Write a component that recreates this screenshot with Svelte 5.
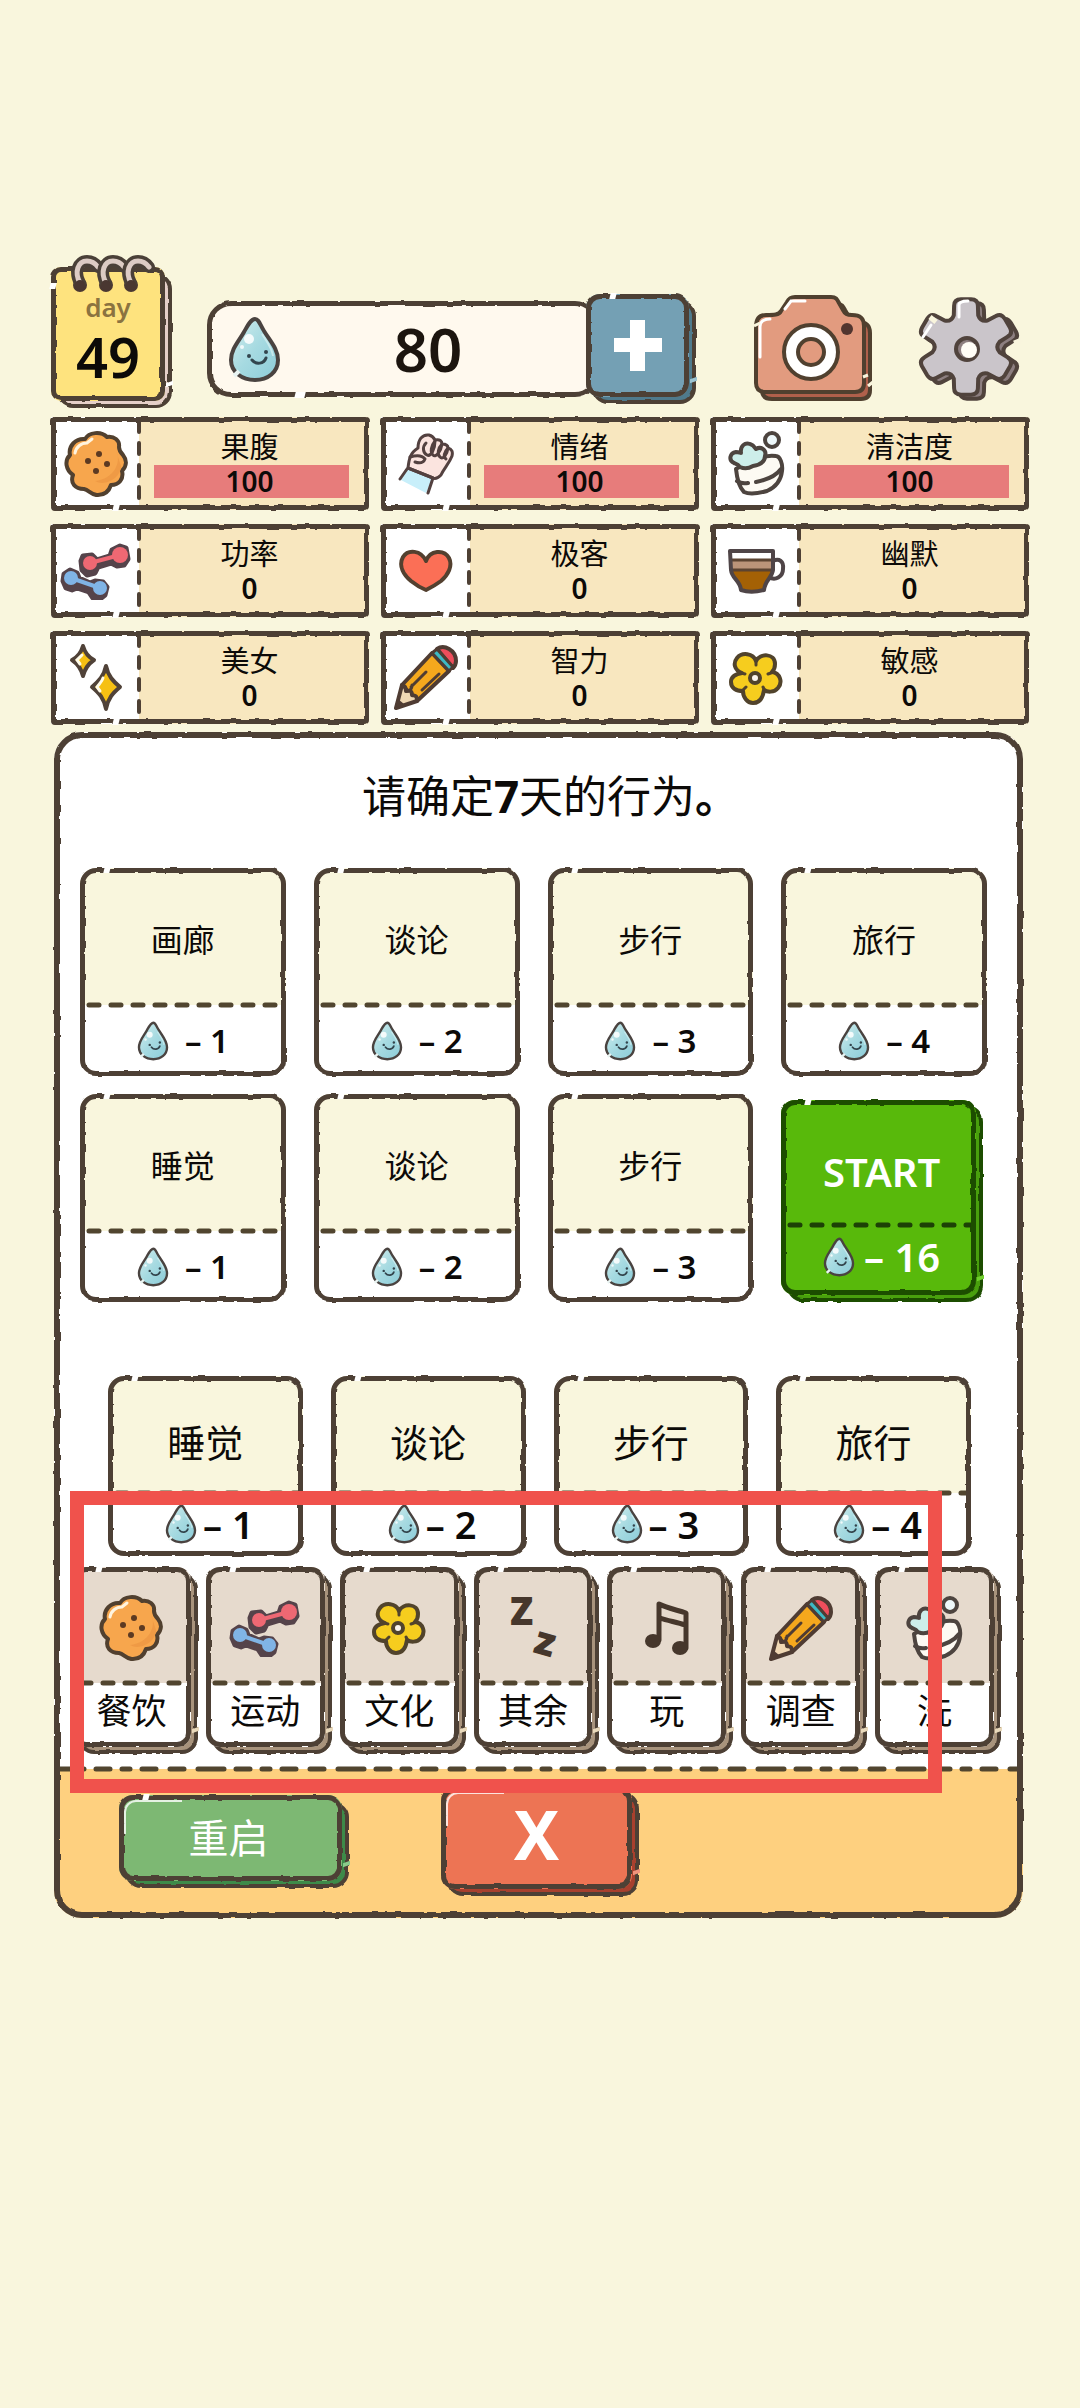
<script>
  const stats = [
    { label: '果腹', value: 100, icon: 'cookie', full: true },
    { label: '情绪', value: 100, icon: 'fist', full: true },
    { label: '清洁度', value: 100, icon: 'soap', full: true },
    { label: '功率', value: 0, icon: 'dumbbell' },
    { label: '极客', value: 0, icon: 'heart' },
    { label: '幽默', value: 0, icon: 'cup' },
    { label: '美女', value: 0, icon: 'sparkle' },
    { label: '智力', value: 0, icon: 'pencil' },
    { label: '敏感', value: 0, icon: 'flower' }
  ];

  const plan = [
    { label: '画廊', cost: 1 },
    { label: '谈论', cost: 2 },
    { label: '步行', cost: 3 },
    { label: '旅行', cost: 4 },
    { label: '睡觉', cost: 1 },
    { label: '谈论', cost: 2 },
    { label: '步行', cost: 3 }
  ];

  const choices = [
    { label: '睡觉', cost: 1 },
    { label: '谈论', cost: 2 },
    { label: '步行', cost: 3 },
    { label: '旅行', cost: 4 }
  ];

  const categories = [
    { label: '餐饮', icon: 'cookie' },
    { label: '运动', icon: 'dumbbell' },
    { label: '文化', icon: 'flower' },
    { label: '其余', icon: 'sleep' },
    { label: '玩', icon: 'music' },
    { label: '调查', icon: 'pencil' },
    { label: '洗', icon: 'soap' }
  ];

  // Six-toothed wheel around (49, 50).
  function gearPath() {
    const point = (r, deg) => {
      const a = (deg * Math.PI) / 180;
      return `${(49 + r * Math.cos(a)).toFixed(1)} ${(50 + r * Math.sin(a)).toFixed(1)}`;
    };
    let d = '';
    for (let i = 0; i < 6; i++) {
      const t = -90 + i * 60;
      d += `${i ? 'L' : 'M'}${point(34, t - 21)}L${point(43, t - 16)}Q${point(49, t - 14)} ${point(48, t - 6)}`;
      d += `L${point(48, t + 6)}Q${point(49, t + 14)} ${point(43, t + 16)}L${point(34, t + 21)}Q${point(29, t + 30)} ${point(34, t + 39)}`;
    }
    return d + 'Z';
  }
  const gear = gearPath();
</script>

{#snippet drop(w, h)}
  <svg class="drop" width={w} height={h} viewBox="0 0 53 67" aria-hidden="true">
    <path d="M27 3c4 0 5 6 9 12 6 10 14 18 14 29 0 12-10 20-23 20S3 56 3 44c0-11 8-19 13-28 4-7 7-13 11-13z" fill="url(#water)" stroke="#4a4340" stroke-width="4" />
    <circle cx="21" cy="23" r="5" fill="#fff" opacity=".85" />
    <circle cx="14" cy="31" r="2" fill="#fff" opacity=".8" />
    <path d="M34 18c5 8 10 14 11 22" fill="none" stroke="#d9f1f1" stroke-width="2" opacity=".7" />
    <circle cx="21" cy="40" r="2" fill="#33454d" />
    <circle cx="38" cy="36" r="2" fill="#33454d" />
    <path d="M24 44c4 5 12 4 14-2" fill="none" stroke="#33454d" stroke-width="3" stroke-linecap="round" />
    <path d="M6 60l5-5" stroke="#e9f4f2" stroke-width="4" />
  </svg>
{/snippet}

{#snippet icon(name)}
  {#if name === 'cookie'}
    <svg width="64" height="66" viewBox="0 0 64 66" aria-hidden="true">
      <path d="M21 8C25 1 37 0 43 6c7-1 13 3 12 10 0 3 1 5 4 8 4 5 4 11-1 16 2 8-3 14-11 14-2 6-6 10-13 10-6 1-9-5-14-6C11 58 6 52 9 44 2 39 0 30 6 24 4 15 12 7 21 8z" fill="#f7a64d" stroke="#51402f" stroke-width="4" stroke-linejoin="round" />
      <path d="M52 20c6 11-2 28-21 30 10 6 26-3 26-15" fill="#ef9a45" />
      <path d="M11 22c1-6 6-10 12-10l5-4" fill="none" stroke="#fff4df" stroke-width="3" stroke-linecap="round" />
      <g fill="#5c3a22"><circle cx="35" cy="23" r="3" /><circle cx="24" cy="30" r="3" /><circle cx="43" cy="33" r="3" /><circle cx="32" cy="40" r="3" /></g>
    </svg>
  {:else if name === 'fist'}
    <svg width="57" height="62" viewBox="0 0 57 62" aria-hidden="true">
      <path d="M10 36L1 46l27 14 7-16z" fill="#c8effa" />
      <g stroke="#534140" stroke-width="3" stroke-linejoin="round" stroke-linecap="round">
        <path d="M10 35c1-9 2-15 10-20 0-8 4-14 11-13 4 1 5 3 6 5 5-1 7 1 7 4 5 0 6 2 6 4 4 1 5 4 4 8-3 8-8 12-11 19-3 3-6 4-8 3z" fill="#fbe4df" />
        <path d="M28 10c-4 4-3 10 1 12s8-6 8-14M37 8c-4 5-5 11-2 14s8-4 9-11M44 11c-4 4-5 10-2 13s7-2 8-9M50 15c-4 4-5 9-2 11M12 24c7-2 12-2 15 2-2 5-7 4-10 3" fill="none" />
        <path d="M10 35l25 10M9 36l-7 10M35 45l-5 15" fill="none" />
      </g>
    </svg>
  {:else if name === 'soap'}
    <svg width="57" height="65" viewBox="0 0 57 65" aria-hidden="true">
      <g stroke="#4d443f" stroke-width="4" stroke-linejoin="round" stroke-linecap="round">
        <path d="M8 38c1 10 3 18 8 23 6 3 16 1 23-1 9-4 14-11 15-20 1-7-2-15-6-15-6-1-12 0-18 4-8 4-16 5-22 9z" fill="#fdfaf3" />
        <path d="M9 50c3 2 6 3 11 2M28 51c10-2 20-6 25-13" fill="none" />
        <path d="M12 36c-2-3-3-3-6-4-6-3-4-10 2-11 3 0 4 1 5 1-1-7 4-11 9-9 4 1 5 4 6 5 5-3 11 1 9 7 0 7-6 9-12 10-5 3-9 3-13 1z" fill="#cdeeea" />
        <circle cx="44" cy="9" r="7" fill="#eef8fa" />
      </g>
    </svg>
  {:else if name === 'dumbbell'}
    <svg width="72" height="58" viewBox="0 0 72 58" aria-hidden="true">
      <g stroke="#55434a" fill="#55434a" stroke-width="5" stroke-linejoin="round">
        <path d="M23 14l9-1 5 5 13-4 2-6 8-4 6 2 2 11-4 6-7 1-6-3-13 4-3 6-8 2-5-5-1-9z" />
        <path d="M4 32l6-4 7 3 2 5 11 5 5-2 8 1 4 5-2 8-5 4-7-1-4-6-12-4-5 2-6-2-3-7z" />
      </g>
      <g fill="#ee6873" stroke="#ee6873" stroke-linecap="round">
        <circle cx="30" cy="21" r="7" stroke="none" />
        <circle cx="60" cy="13" r="8" stroke="none" />
        <path d="M30 21l30-8" stroke-width="4" />
      </g>
      <g fill="#80b4e6" stroke="#80b4e6" stroke-linecap="round">
        <circle cx="11" cy="36" r="7" stroke="none" />
        <circle cx="40" cy="46" r="7" stroke="none" />
        <path d="M11 36l29 10" stroke-width="4" />
      </g>
    </svg>
  {:else if name === 'heart'}
    <svg width="54" height="44" viewBox="0 0 54 44" aria-hidden="true">
      <path d="M27 12C22 1 9 0 4 8c-5 9 1 18 8 24 5 4 10 7 15 9 6-3 11-6 15-9 7-6 12-15 8-23C45 0 31 1 27 12z" fill="#fb6f56" stroke="#53402f" stroke-width="4" stroke-linejoin="round" />
    </svg>
  {:else if name === 'cup'}
    <svg width="59" height="46" viewBox="0 0 59 46" aria-hidden="true">
      <path d="M46 13c6-3 11 0 10 8 0 8-8 12-14 8" fill="none" stroke="#4f4547" stroke-width="4" />
      <path d="M3 3h43v19c-1 8-8 10-9 20-8 2-17 2-23 0C13 32 5 31 4 22z" fill="#fff" />
      <path d="M3 12h43v11H4z" fill="#bb9479" />
      <path d="M4 22h42c-1 9-8 11-9 20-8 2-17 2-23 0-1-9-9-11-10-20z" fill="#a46105" />
      <path d="M4 22h42M3 12h43" stroke="#5b4331" stroke-width="3" />
      <path d="M3 3h43v19c-1 8-8 10-9 20-8 2-17 2-23 0C13 32 5 31 4 22z" fill="none" stroke="#4f4547" stroke-width="4" stroke-linejoin="round" />
    </svg>
  {:else if name === 'sparkle'}
    <svg width="56" height="70" viewBox="0 0 56 70" aria-hidden="true">
      <g fill="#f6c013" stroke="#504238" stroke-width="4" stroke-linejoin="round">
        <path d="M15 3c2 7 5 11 11 14-6 4-9 8-11 16-2-8-5-12-11-16 6-3 9-7 11-14z" />
        <path d="M38 23c2 10 7 15 14 21-7 6-12 11-14 22-2-11-7-16-14-22 7-6 12-11 14-21z" />
      </g>
      <path d="M14 12l-5 5 3 4M35 35c-1 4-4 6-6 9l3 4" fill="none" stroke="#fffbe8" stroke-width="3" stroke-linecap="round" />
    </svg>
  {:else if name === 'pencil'}
    <svg width="64" height="65" viewBox="0 0 64 65" aria-hidden="true">
      <g stroke="#4f3c33" stroke-width="4" stroke-linejoin="round" stroke-linecap="round">
        <path d="M8 40L38 8l17 18-32 30z" fill="#f5a81d" />
        <path d="M8 40L2 63l21-7c0-6-2-5-5-6 0-4-2-5-6-4 0-3-1-5-4-6z" fill="#f0d8b4" />
        <path d="M43 4c7-5 19 1 19 12 0 3-1 5-3 7z" fill="#ee4e5c" />
        <path d="M38 8l5-4 16 18-4 4z" fill="#3db9c4" stroke-width="3" />
        <path d="M17 42l15-15M28 45l17-16M14 46c3-1 4-3 4-6" fill="none" stroke-width="3" />
      </g>
      <path d="M4 54l6 5-8 4z" fill="#4f3c33" />
    </svg>
  {:else if name === 'flower'}
    <svg width="54" height="54" viewBox="0 0 54 54" aria-hidden="true">
      <path d="M27 10c4-8 19-8 19 3 0 4-1 6-3 8 8 1 11 10 6 16-4 5-11 4-14 2-1 7-4 13-11 13-6 0-10-6-10-12-7 0-12-3-12-9s5-8 11-9C5 19 4 12 8 7c5-6 16-5 19 3z" fill="#f6cd1e" stroke="#51432c" stroke-width="4" stroke-linejoin="round" />
      <path d="M27 11v3M42 22l-3 1M35 38l-1-2M14 39l3-3M12 22l4 1" stroke="#51432c" stroke-width="3" stroke-linecap="round" />
      <circle cx="26" cy="27" r="5" fill="#fbf5ee" stroke="#51432c" stroke-width="4" />
    </svg>
  {:else if name === 'sleep'}
    <svg class="sleep" width="46" height="64" viewBox="0 0 46 64" aria-hidden="true">
      <text class="zed" x="0" y="29" font-size="38">Z</text>
      <text class="zed" x="0" y="0" font-size="40" transform="translate(22 56) rotate(16)">z</text>
    </svg>
  {:else}
    <svg width="44" height="55" viewBox="0 0 44 55" aria-hidden="true">
      <g fill="none" stroke="#46372c" stroke-width="5" stroke-linecap="round" stroke-linejoin="round">
        <path d="M14 39V3c8 4 18 6 27 9v35M15 17c8 3 17 4 25 7" />
      </g>
      <ellipse cx="8" cy="40" rx="8" ry="7" fill="#46372c" />
      <ellipse cx="35" cy="47" rx="8" ry="7" fill="#46372c" />
    </svg>
  {/if}
{/snippet}

{#snippet dashes()}
  <svg class="dashes" width="100%" height="6" aria-hidden="true">
    <line x1="9" y1="3" x2="98%" y2="3" stroke-width="5" stroke-linecap="round" stroke-dasharray="10 12" />
  </svg>
{/snippet}

{#snippet card(item)}
  <button class="card sketch">
    <span class="card-top">{item.label}</span>
    {@render dashes()}
    <span class="cost">{@render drop(32, 40)}<span>– {item.cost}</span></span>
  </button>
{/snippet}

<svg class="defs" width="0" height="0" aria-hidden="true">
  <defs>
    <filter id="rough" x="-5%" y="-5%" width="110%" height="110%">
      <feTurbulence type="fractalNoise" baseFrequency="0.08" numOctaves="2" seed="4" result="n" />
      <feDisplacementMap in="SourceGraphic" in2="n" scale="3" xChannelSelector="R" yChannelSelector="G" />
    </filter>
    <linearGradient id="water" x1="0" y1="0" x2="1" y2="1">
      <stop offset="0" stop-color="#d4eeee" />
      <stop offset=".5" stop-color="#a6dae1" />
      <stop offset="1" stop-color="#8cccd8" />
    </linearGradient>
  </defs>
</svg>

<main>
  <header>
    <div class="calendar">
      <svg class="rings" width="86" height="40" viewBox="0 0 86 40" aria-hidden="true">
        {#each [0, 26, 51] as x}
          <g transform="translate({x} 0)" fill="none" stroke-linecap="round">
            <circle cx="10" cy="31" r="7" fill="#4a3731" />
            <path d="M10 29C4 18 8 7 17 7c5 0 8 2 11 6" stroke="#4a4038" stroke-width="12" />
            <path d="M10 29C4 18 8 7 17 7c5 0 8 2 11 6" stroke="#dccbc4" stroke-width="5" />
            <circle cx="10" cy="31" r="5" fill="#4a3731" />
          </g>
        {/each}
      </svg>
      <div class="block day-block">
        <div class="face day-face">
          <span class="day">day</span>
          <span class="date">49</span>
        </div>
      </div>
    </div>

    <div class="wallet">
      <div class="amount sketch">
        {@render drop(53, 67)}
        <span>80</span>
      </div>
      <button class="block plus" aria-label="add water">
        <span class="face">
          <svg width="50" height="53" viewBox="0 0 50 53" aria-hidden="true">
            <path d="M17 1h15v18h17v14H32v19H17V33H1V19h16z" fill="#fff" />
          </svg>
        </span>
      </button>
    </div>

    <button class="tool camera" aria-label="camera">
      <svg width="120" height="108" viewBox="0 0 120 108" aria-hidden="true">
        <g stroke="#50402f" stroke-width="4" stroke-linejoin="round">
          <path transform="translate(6 7)" fill="#b0604b" d="M2 32c0-8 3-12 10-12 8 0 13 0 15-4l6-9c2-4 4-5 8-5h36c5 0 6 2 8 6l4 7c2 4 4 5 9 5 9 0 12 4 12 11v57c0 6-3 9-9 9H12c-7 0-10-3-10-9z" />
          <path fill="#e29b7f" d="M2 32c0-8 3-12 10-12 8 0 13 0 15-4l6-9c2-4 4-5 8-5h36c5 0 6 2 8 6l4 7c2 4 4 5 9 5 9 0 12 4 12 11v57c0 6-3 9-9 9H12c-7 0-10-3-10-9z" />
          <circle cx="57" cy="57" r="27" fill="#fff" />
          <circle cx="57" cy="57" r="13" fill="#e29b7f" />
        </g>
        <path d="M6 62V32c0-6 4-8 10-8M31 14l6-8h14" fill="none" stroke="#fff" stroke-width="3" stroke-linecap="round" />
        <circle cx="93" cy="34" r="6" fill="#51352f" />
        <path d="M0 31l6-3M109 82l5-2M114 91l5-4" stroke="#f9f5dd" stroke-width="3" />
      </svg>
    </button>

    <button class="tool gear" aria-label="settings">
      <svg width="106" height="106" viewBox="0 0 106 106" aria-hidden="true">
        <g stroke="#50433c" stroke-width="4" stroke-linejoin="round">
          <path transform="translate(6 4)" d={gear} fill="#8d7f80" />
          <path d={gear} fill="#cac5ca" />
          <circle cx="50" cy="52" r="11" fill="#8d7f80" />
        </g>
        <circle cx="52" cy="53" r="8" fill="#fffdf6" />
        <path d="M42 20V8c0-3 3-4 9-4M6 40l8-12" fill="none" stroke="#fff" stroke-width="3" stroke-linecap="round" />
        <path d="M13 20l6 5M97 46l8-3" stroke="#f9f5dd" stroke-width="5" />
      </svg>
    </button>
  </header>

  <section class="stats">
    {#each stats as s}
      <div class="stat sketch">
        <div class="stat-icon">{@render icon(s.icon)}</div>
        <svg class="rule" width="5" height="100%" aria-hidden="true">
          <line x1="2" y1="4" x2="2" y2="100%" stroke-width="4" stroke-linecap="round" stroke-dasharray="11 11" />
        </svg>
        <div class="stat-body">
          <span class="stat-label">{s.label}</span>
          <span class="stat-value" class:full={s.full}>{s.value}</span>
        </div>
      </div>
    {/each}
  </section>

  <section class="panel">
    <h1>请确定<b>7</b>天的行为<b>。</b></h1>

    <div class="plan">
      {#each plan as item}
        {@render card(item)}
      {/each}
      <button class="block start">
        <span class="face">
          <span class="start-label">START</span>
          {@render dashes()}
          <span class="cost">{@render drop(32, 40)}<span>– 16</span></span>
        </span>
      </button>
    </div>

    <div class="picker">
      <div class="choices">
        {#each choices as item}
          {@render card(item)}
        {/each}
      </div>
      <div class="categories">
        {#each categories as c}
          <button class="block tile">
            <span class="face">
              <span class="tile-icon">{@render icon(c.icon)}</span>
              {@render dashes()}
              <span class="tile-label">{c.label}</span>
            </span>
          </button>
        {/each}
      </div>
      <div class="highlight"></div>
    </div>

    <footer>
      <svg class="dashes seam" width="100%" height="6" aria-hidden="true">
        <line x1="4" y1="3" x2="100%" y2="3" stroke-width="5" stroke-linecap="round" stroke-dasharray="26 12 14 12 8 12 14 14 14 14" />
      </svg>
      <div class="actions">
        <button class="block restart"><span class="face"><i class="shine"></i>重启</span></button>
        <button class="block close"><span class="face"><i class="shine"></i>X</span></button>
      </div>
    </footer>
  </section>
</main>

<style>
  :global(body) {
    background: #f9f6dd;
  }

  main {
    --ink: #4e4034;
    --cream: #f9f6dd;
    min-height: 100vh;
    box-sizing: border-box;
    padding: 254px 51px 100px 51px;
    background: var(--cream);
    color: #0c0a08;
    font-family: 'Noto Sans', 'Noto Sans CJK SC', sans-serif;
  }

  .defs {
    position: absolute;
  }

  svg {
    display: block;
    flex: none;
  }

  button {
    display: block;
    margin: 0;
    padding: 0;
    border: 0;
    background: none;
    color: inherit;
    font: inherit;
    cursor: pointer;
  }

  /* Hand-drawn outline: a rough border with a small break in it. */
  .sketch,
  .block,
  .face {
    position: relative;
  }

  .sketch::before,
  .face::before {
    content: '';
    position: absolute;
    inset: 0;
    border: 5px solid var(--ink);
    border-radius: inherit;
    filter: url(#rough);
    pointer-events: none;
  }

  .sketch::after,
  .face::after {
    content: '';
    position: absolute;
    top: -1px;
    left: 24px;
    width: 6px;
    height: 6px;
    background: #fff;
    transform: skewX(-14deg);
  }

  .block {
    padding: 0 7px 7px 0;
  }

  .block::before {
    content: '';
    position: absolute;
    inset: 6px 0 0 6px;
    box-sizing: border-box;
    border: 4px solid var(--ink);
    border-radius: 16px;
    background: var(--back, #a8937c);
    filter: url(#rough);
  }

  .block::after {
    content: '';
    position: absolute;
    right: -1px;
    bottom: 22px;
    width: 7px;
    height: 4px;
    background: var(--gap, #fff);
    transform: skewY(-20deg);
  }

  .face {
    display: flex;
    flex-direction: column;
    height: 100%;
    box-sizing: border-box;
    border-radius: 14px;
  }

  .dashes line {
    stroke: var(--dash, #51452f);
  }

  header {
    display: flex;
    align-items: flex-end;
    padding: 0 6px 9px 0;
  }

  .calendar {
    flex: none;
    width: 121px;
    --back: #e5cfc8;
    --gap: #fff;
  }

  .rings {
    position: relative;
    z-index: 1;
    margin: 0 auto -27px 19px;
  }

  .day-block {
    height: 141px;
    box-sizing: border-box;
  }

  .day-face {
    align-items: center;
    padding-top: 23px;
    border-radius: 10px;
    background: #fee37e;
  }

  .face.day-face::after {
    top: 16px;
    left: -1px;
  }

  .day {
    color: #8b7340;
    font-size: 26px;
    font-weight: 600;
    line-height: 34px;
  }

  .date {
    font-size: 56px;
    font-weight: 600;
    line-height: 64px;
  }

  .wallet {
    display: flex;
    flex: 1;
    align-items: center;
    margin: 0 0 4px 35px;
  }

  .amount {
    display: flex;
    flex: 1;
    align-items: center;
    height: 96px;
    box-sizing: border-box;
    padding: 0 24px 0 21px;
    border-radius: 24px;
    background: #fff9ee;
  }

  .sketch.amount::after {
    top: auto;
    bottom: -1px;
    left: 88px;
    width: 10px;
  }

  .amount span {
    flex: 1;
    color: #1c150f;
    font-size: 60px;
    font-weight: 600;
    line-height: 80px;
    text-align: center;
  }

  .plus {
    flex: none;
    width: 110px;
    height: 110px;
    margin-left: -13px;
    --back: #4f7a8c;
    --gap: #9cc4d2;
  }

  .plus .face {
    align-items: center;
    justify-content: center;
    background: #74a0b4;
  }

  .tool {
    margin-bottom: 5px;
  }

  .camera {
    margin-left: 58px;
  }

  .gear {
    margin-left: 43px;
  }

  .stats {
    display: grid;
    grid-template-columns: repeat(3, 1fr);
    gap: 14px 12px;
  }

  .stat {
    display: flex;
    height: 93px;
    border-radius: 4px;
    background: #f8e7bf;
  }

  .sketch.stat::after {
    top: auto;
    bottom: -1px;
    left: 62px;
  }

  .stat-icon {
    display: flex;
    flex: none;
    align-items: center;
    justify-content: center;
    width: 86px;
    padding-left: 4px;
    box-sizing: border-box;
    background: #fff;
  }

  .rule {
    background: linear-gradient(90deg, #fff 50%, #f8e7bf 50%);
  }

  .rule line {
    stroke: var(--ink);
  }

  .stat-body {
    display: flex;
    flex: 1;
    flex-direction: column;
    padding: 12px 20px 0 12px;
    text-align: center;
  }

  .stat-label {
    padding-right: 4px;
    font-size: 29px;
    line-height: 36px;
  }

  .stat-value {
    padding-right: 4px;
    font-size: 28px;
    font-weight: 600;
    line-height: 33px;
  }

  .full {
    background: #e77c7b;
  }

  .panel {
    position: relative;
    margin: 8px 6px 0 3px;
    padding-top: 34px;
    border-radius: 28px;
    background: #fff;
  }

  .panel::before {
    content: '';
    position: absolute;
    inset: 0;
    border: 6px solid var(--ink);
    border-radius: inherit;
    filter: url(#rough);
    pointer-events: none;
    z-index: 1;
  }

  h1 {
    margin: 0;
    padding-left: 24px;
    font-size: 44px;
    font-weight: 400;
    line-height: 60px;
    text-align: center;
  }

  .plan {
    display: grid;
    grid-template-columns: repeat(4, 1fr);
    gap: 18px 28px;
    padding: 42px 36px 0 26px;
  }

  .card {
    display: flex;
    flex-direction: column;
    height: 208px;
    border-radius: 16px;
    background: #fff;
  }

  .card-top {
    display: flex;
    align-items: center;
    justify-content: center;
    height: 137px;
    padding-top: 6px;
    box-sizing: border-box;
    border-radius: 16px 16px 0 0;
    background: var(--cream);
    font-size: 32px;
    line-height: 40px;
  }

  .card .dashes,
  .tile .dashes,
  .start .dashes {
    margin: -3px 0;
  }

  .cost {
    display: flex;
    flex: 1;
    align-items: center;
    justify-content: center;
    gap: 16px;
    font-size: 33px;
    font-weight: 600;
    line-height: 40px;
  }

  .start {
    margin: 6px 4px 0 0;
    --back: #4aa00a;
    --ink: #1d4d06;
    --dash: #1d4106;
    --gap: #6fcf2c;
    color: #fff;
  }

  .start .face {
    background: #58b90b;
  }

  .start-label {
    height: 125px;
    padding: 20px 0 0 6px;
    box-sizing: border-box;
    font-size: 40px;
    font-weight: 600;
    line-height: 104px;
    text-align: center;
  }

  .start .cost {
    gap: 9px;
    padding: 0 0 6px 6px;
    font-size: 40px;
  }

  .picker {
    position: relative;
    padding-top: 74px;
  }

  .choices {
    display: grid;
    grid-template-columns: repeat(4, 1fr);
    gap: 28px;
    padding: 0 52px 0 54px;
  }

  .choices .card {
    height: 180px;
  }

  .choices .card-top {
    height: 117px;
    padding-top: 15px;
    font-size: 38px;
  }

  .choices .cost {
    gap: 6px;
    padding: 0 0 2px 8px;
    font-size: 38px;
  }

  .categories {
    display: grid;
    grid-template-columns: repeat(7, 1fr);
    gap: 8px;
    padding: 11px 22px 12px 18px;
  }

  .tile {
    height: 187px;
    --gap: #e9d9bb;
  }

  .tile .face {
    background: #fff;
  }

  .tile-icon {
    display: flex;
    align-items: center;
    justify-content: center;
    height: 116px;
    padding-top: 6px;
    box-sizing: border-box;
    border-radius: 14px 14px 0 0;
    background: #e6dacd;
  }

  .tile-label {
    font-size: 35px;
    line-height: 56px;
    text-align: center;
  }

  .sleep {
    overflow: visible;
  }

  .zed {
    fill: #46372c;
    font-weight: 900;
  }

  .highlight {
    position: absolute;
    top: 189px;
    right: 81px;
    bottom: -27px;
    left: 16px;
    z-index: 2;
    border: 14px solid #f0524c;
    box-sizing: border-box;
    pointer-events: none;
  }

  footer {
    border-radius: 0 0 28px 28px;
    background: #fed07f;
  }

  .seam {
    background: linear-gradient(#fff 50%, #fed07f 50%);
  }

  .actions {
    display: flex;
    align-items: center;
    gap: 92px;
    padding: 15px 65px 22px;
  }

  .restart {
    width: 230px;
    height: 93px;
    --back: #3c8a48;
    --gap: #8ccb8a;
  }

  .restart .face {
    align-items: center;
    justify-content: center;
    padding-right: 4px;
    background: #7db873;
    color: #fff;
    font-size: 40px;
    line-height: 48px;
  }

  .close {
    width: 198px;
    height: 109px;
    --back: #a8402e;
    --gap: #f0937c;
  }

  .close .face {
    align-items: center;
    justify-content: center;
    padding-bottom: 8px;
    background: #ed7454;
    color: #fff;
    font-size: 68px;
    font-weight: 700;
    line-height: 72px;
  }

  .shine {
    position: absolute;
    top: 5px;
    left: 5px;
    width: 56px;
    height: 32px;
    border-top: 2px solid #fffc;
    border-left: 2px solid #fffc;
    border-radius: 12px 0 0 0;
  }
</style>
